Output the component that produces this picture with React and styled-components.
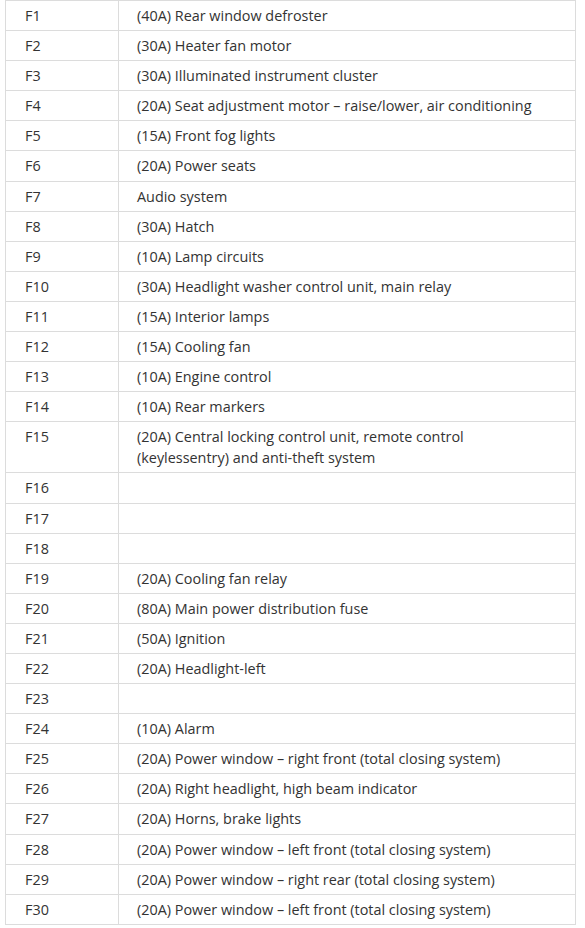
import React from "react";
import styled, { createGlobalStyle } from "styled-components";

const GlobalStyle = createGlobalStyle`
  body {
    margin: 0;
    background: #ffffff;
  }
`;

const Page = styled.div`
  padding: 0 0 0 5px;
`;

const FuseTable = styled.table`
  width: 571px;
  border-collapse: collapse;
  font-family: "Open Sans", "Liberation Sans", sans-serif;
  font-size: 14.4px;
  color: #333333;
  border: 1px solid #dcdcdc;
`;

const Cell = styled.td`
  border: 1px solid #dcdcdc;
  padding: 4px 19px 4.1px ${({ $narrow }) => ($narrow ? "19px" : "18px")};
  line-height: 21px;
  vertical-align: top;
  text-align: left;
  width: ${({ $narrow }) => ($narrow ? "74px" : "auto")};
`;

const fuses = [
  ["F1", "(40A) Rear window defroster"],
  ["F2", "(30A) Heater fan motor"],
  ["F3", "(30A) Illuminated instrument cluster"],
  ["F4", "(20A) Seat adjustment motor – raise/lower, air conditioning"],
  ["F5", "(15A) Front fog lights"],
  ["F6", "(20A) Power seats"],
  ["F7", "Audio system"],
  ["F8", "(30A) Hatch"],
  ["F9", "(10A) Lamp circuits"],
  ["F10", "(30A) Headlight washer control unit, main relay"],
  ["F11", "(15A) Interior lamps"],
  ["F12", "(15A) Cooling fan"],
  ["F13", "(10A) Engine control"],
  ["F14", "(10A) Rear markers"],
  ["F15", "(20A) Central locking control unit, remote control (keylessentry) and anti-theft system"],
  ["F16", ""],
  ["F17", ""],
  ["F18", ""],
  ["F19", "(20A) Cooling fan relay"],
  ["F20", "(80A) Main power distribution fuse"],
  ["F21", "(50A) Ignition"],
  ["F22", "(20A) Headlight-left"],
  ["F23", ""],
  ["F24", "(10A) Alarm"],
  ["F25", "(20A) Power window – right front (total closing system)"],
  ["F26", "(20A) Right headlight, high beam indicator"],
  ["F27", "(20A) Horns, brake lights"],
  ["F28", "(20A) Power window – left front (total closing system)"],
  ["F29", "(20A) Power window – right rear (total closing system)"],
  ["F30", "(20A) Power window – left front (total closing system)"],
];

export default function App() {
  return (
    <>
      <GlobalStyle />
      <Page>
        <FuseTable>
          <tbody>
            {fuses.map(([id, desc]) => (
              <tr key={id}>
                <Cell $narrow>{id}</Cell>
                <Cell>{desc}</Cell>
              </tr>
            ))}
          </tbody>
        </FuseTable>
      </Page>
    </>
  );
}
